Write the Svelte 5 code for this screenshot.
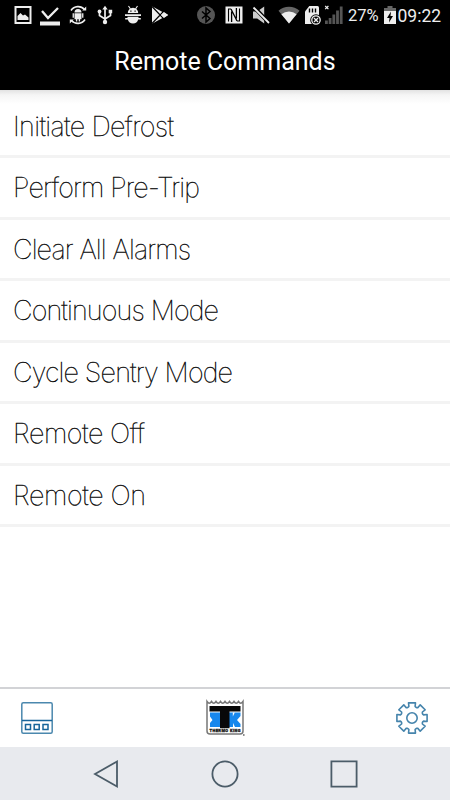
<script lang="ts">
	type Command = {
		label: string;
		width: number;
	};

	// width is the set length of each label, in px
	const commands: Command[] = [
		{ label: 'Initiate Defrost', width: 161 },
		{ label: 'Perform Pre-Trip', width: 187 },
		{ label: 'Clear All Alarms', width: 178 },
		{ label: 'Continuous Mode', width: 206 },
		{ label: 'Cycle Sentry Mode', width: 220 },
		{ label: 'Remote Off', width: 132 },
		{ label: 'Remote On', width: 133 }
	];

	const teeth = [0, 45, 90, 135, 180, 225, 270, 315];
	const rad = (deg: number) => (deg * Math.PI) / 180;
	const point = (r: number, deg: number) =>
		`${(16 + r * Math.cos(rad(deg))).toFixed(2)} ${(16 + r * Math.sin(rad(deg))).toFixed(2)}`;

	const gear =
		teeth
			.map((a, i) => {
				const start = `${i ? 'L' : 'M'}${point(11.4, a - 20)}`;
				return `${start} L${point(12, a - 15)} L${point(15.5, a - 13)} L${point(15.5, a + 13)} L${point(12, a + 15)} L${point(11.4, a + 20)}`;
			})
			.join(' ') + ' Z';

	let selected = $state('');
</script>

<div class="screen">
	<div class="status">
		<div class="notifications">
			<svg viewBox="0 0 20 20">
				<path d="M2.5 2h15v16h-15z" fill="none" stroke="#eee" stroke-width="2" />
				<path d="M4.5 15V11l3-3 2.5 2.5 2-1 3.5 3V15z" />
			</svg>
			<svg viewBox="0 0 20 20">
				<path d="M2 6l6 7L18 3" fill="none" stroke="#eee" stroke-width="2.3" />
				<path d="M0 16.5h20v4H0z" />
			</svg>
			<svg viewBox="0 0 20 20">
				<path d="M3 5.5A8.5 8.5 0 0 1 16.5 4.5M17 14.5A8.5 8.5 0 0 1 3.5 15.5" fill="none" stroke="#eee" stroke-width="1.6" />
				<path d="M14.2 5.5h4V1.5zM5.8 14.5h-4v4z" />
				<path d="M6.5 7.5a3.5 3.5 0 0 1 7 0zM6.5 8.2h7v6h-1.4v2.3h-1.4v-2.3H9.3v2.3H7.9v-2.3H6.5zM4.6 8.2h1.3v4.5H4.6zM14.1 8.2h1.3v4.5h-1.3z" />
			</svg>
			<svg viewBox="0 0 20 20">
				<path d="M10 3v15M4.5 7v3.5L10 14l5.5-3.5V7" fill="none" stroke="#eee" stroke-width="1.7" />
				<path d="M7.3 4.5L10 .8l2.7 3.7zM13.7 4.8h3.5v3.5h-3.5z" />
				<circle cx="4.5" cy="6.5" r="1.9" />
				<circle cx="10" cy="17" r="2.2" />
			</svg>
			<svg viewBox="0 0 20 20">
				<path d="M4.8 8a5.2 5.2 0 0 1 10.4 0zM2 9.3h16v1.6H2zM4.5 11.8h11v1.3h2.3v1.5h-2.6a5.4 5.4 0 0 1-10.4 0H2.2v-1.5h2.3z" />
				<path d="M5.5 1l2 3M14.5 1l-2 3" stroke="#eee" stroke-width="1.1" />
				<path d="M7.3 5.6h1.2v1.2H7.3zM11.5 5.6h1.2v1.2h-1.2z" fill="#000" />
			</svg>
			<svg viewBox="0 0 20 20">
				<path d="M2 1.2L18 10 2 18.8z" />
				<path d="M2 1.5l11 11.5M2 18.5L13 7" fill="none" stroke="#000" stroke-width="1.2" />
				<path d="M14 7l4.2 3-4.2 3-3-3z" />
			</svg>
		</div>

		<div class="system">
			<svg viewBox="0 0 20 20">
				<circle cx="10" cy="10" r="9" fill="#555" />
				<path d="M6 6.5l8 7-4 3.5V3l4 3.5-8 7" fill="none" stroke="#000" stroke-width="1.5" />
			</svg>
			<svg viewBox="0 0 20 20">
				<path d="M1.5 1.5h17v17h-17z" />
				<path d="M7 4H4.5v12.5M13 16h2.5V3.5" fill="none" stroke="#000" stroke-width="1.1" />
				<path d="M7.6 17V6.5M12.4 3v10.5M7 4l6 12" fill="none" stroke="#000" stroke-width="1.3" />
			</svg>
			<svg viewBox="0 0 20 20">
				<path d="M2 6.5h4.2l7-5v17l-7-5H2z" fill="#ccc" />
				<path d="M2.5 1.5l16 17" stroke="#000" stroke-width="4" />
				<path d="M2.5 2.5l15.5 15.5" stroke="#eee" stroke-width="1.8" />
			</svg>
			<svg viewBox="0 0 20 20">
				<path d="M-.5 5.8a15.5 15.5 0 0 1 21 0L10 18.5z" fill="#666" />
				<path d="M2.4 9.3a12 12 0 0 1 15.2 0L10 18.5z" />
			</svg>
			<svg class="sd" viewBox="0 0 20 20">
				<path d="M6.3 1h8.2q1.5 0 1.5 1.5V19H2V6.5z" />
				<path d="M6.5 3.5v4M9.5 3.5v4M12.5 3.5v4" stroke="#000" stroke-width="1.4" />
				<circle cx="13" cy="15" r="5.8" fill="#000" />
				<circle cx="13" cy="15" r="4.2" fill="none" stroke="#eee" stroke-width="1.3" />
				<path d="M11 13l4 4m0-4l-4 4" stroke="#eee" stroke-width="1.4" />
			</svg>
			<svg class="signal" viewBox="0 0 20 20">
				<path d="M1 15.5h2.8V19H1zM4.7 13h2.8v6H4.7zM8.4 9.5h2.8V19H8.4zM12.1 5.5h2.8V19h-2.8zM15.8 1.5h2.8V19h-2.8z" fill="#555" />
				<path d="M1.2 1l3.2 3.2m0-3.2L1.2 4.2" stroke="#eee" stroke-width="1.2" />
			</svg>
			<span class="percent">27%</span>
			<svg class="battery" viewBox="0 0 12 20">
				<path d="M3.5 1h5v2H12v4H0V3h3.5z" fill="#666" />
				<path d="M0 6h12v13H0z" />
				<path d="M7 6.5L3 13h2.5L5 17.5 9 11H6.5z" fill="#000" />
			</svg>
			<span class="clock">09:22</span>
		</div>
	</div>

	<header>Remote Commands</header>

	<main>
		{#each commands as command (command.label)}
			<button class="command" type="button" onclick={() => (selected = command.label)}>
				<svg class="label" viewBox="0 0 300 58">
					<text x="13" y="39" textLength={command.width} lengthAdjust="spacing">{command.label}</text>
				</svg>
			</button>
		{/each}
	</main>

	<footer>
		<svg class="unit" viewBox="0 0 32 32" fill="none" stroke="#4b88ae" stroke-width="1.5">
			<rect x=".8" y=".8" width="30.4" height="30.4" rx="1.5" />
			<path d="M1 18.5h30M4.5 22.5h5v5h-5zM13.2 22.5h5v5h-5zM22 22.5h5v5h-5z" stroke="#17659a" />
		</svg>
		<svg class="logo" viewBox="0 0 40 36">
			<path d="M2 1.5q2.25 3.5 4.5 0 2.25 3.5 4.5 0 2.25 3.5 4.5 0 2.25 3.5 4.5 0 2.25 3.5 4.5 0 2.25 3.5 4.5 0 2.25 3.5 4.5 0 2.25 3.5 4.5 0V31q0 3-3 3h-30q-3 0-3-3z" fill="#fff" stroke="#777" stroke-width="1.5" />
			<path d="M5 12.5h10V27H5v-4l2.5-3L5 16.5zM24 12.5h11.5v3.5L32 20l3.5 4v3H30l-2-4v4H24z" fill="#1787ed" />
			<path d="M27.8 12.5v4l2-4z" fill="#fff" />
			<path d="M4.5 6h31v5.5H24.5V28.3H15V11.5H4.5z" fill="#080808" />
			<text x="4.5" y="31.6" textLength="31">THERMO KING</text>
			<circle cx="38.8" cy="35" r=".9" fill="#777" />
		</svg>
		<svg class="gear" viewBox="0 0 32 32" fill="none" stroke="#4584ac" stroke-width="1.6" stroke-linejoin="round">
			<path d={gear} />
			<circle cx="16" cy="16" r="5.2" />
		</svg>
	</footer>

	<nav>
		<svg viewBox="0 0 28 28"><path d="M3 14L25 1.5v25z" /></svg>
		<svg viewBox="0 0 28 28"><circle cx="14" cy="14" r="12.6" /></svg>
		<svg viewBox="0 0 28 28"><path d="M1.4 1.4h25.2v25.2H1.4z" /></svg>
	</nav>
</div>

<style>
	.screen {
		display: flex;
		flex-direction: column;
		width: 450px;
		height: 800px;
		background: #fff;
		font-family: Roboto, sans-serif;
		overflow: hidden;
	}

	svg {
		display: block;
		flex: none;
		overflow: visible;
	}

	.status {
		display: flex;
		height: 30px;
		padding-left: 12.5px;
		background: #000;
		color: #eee;
	}

	.notifications,
	.system {
		display: flex;
		align-items: center;
		gap: 7.5px;
	}

	.system {
		margin-left: 26px;
	}

	.status svg {
		width: 20px;
		height: 20px;
		fill: #eee;
	}

	.status .sd {
		margin-left: -3px;
	}

	.status .signal {
		margin-left: -6.5px;
	}

	.percent {
		width: 30px;
		margin-left: -3.5px;
		padding-top: 2px;
		font-size: 16.5px;
		line-height: 20px;
	}

	.status .battery {
		width: 12px;
		margin-left: -2px;
	}

	.clock {
		margin-left: -5.5px;
		padding-top: 2px;
		font-size: 17.5px;
		line-height: 20px;
	}

	header {
		height: 60px;
		background: #000;
		color: #fff;
		font-size: 25px;
		line-height: 63px;
		text-align: center;
	}

	main {
		flex: 1;
		padding-top: 6.6px;
		background: linear-gradient(#e2e2e2, #f5f5f5 5px, #fff 14px);
	}

	.command {
		display: block;
		width: 100%;
		height: 61.5px;
		padding: 0;
		border: none;
		border-bottom: 3px solid #f3f3f3;
		background: transparent;
		cursor: pointer;
	}

	.label {
		width: 300px;
		height: 58px;
	}

	.label text {
		font-family: Inter, sans-serif;
		font-size: 27px;
		font-weight: 100;
		fill: #000;
		stroke: #000;
		stroke-width: 0.35px;
	}

	footer {
		display: flex;
		align-items: center;
		justify-content: space-between;
		height: 60px;
		padding: 0 22px 0 21px;
		border-top: 2px solid #d2d3d6;
		box-sizing: border-box;
	}

	.unit,
	.gear {
		width: 32px;
		height: 32px;
	}

	.logo {
		width: 40px;
		height: 36px;
	}

	.logo text {
		font-size: 4px;
		font-weight: 900;
		fill: #222;
		stroke: #222;
		stroke-width: 0.3px;
	}

	nav {
		display: flex;
		align-items: center;
		justify-content: center;
		gap: 91px;
		height: 53px;
		background: #e8eaee;
	}

	nav svg {
		width: 28px;
		height: 28px;
		fill: none;
		stroke: #4b5c68;
		stroke-width: 1.8;
	}
</style>
